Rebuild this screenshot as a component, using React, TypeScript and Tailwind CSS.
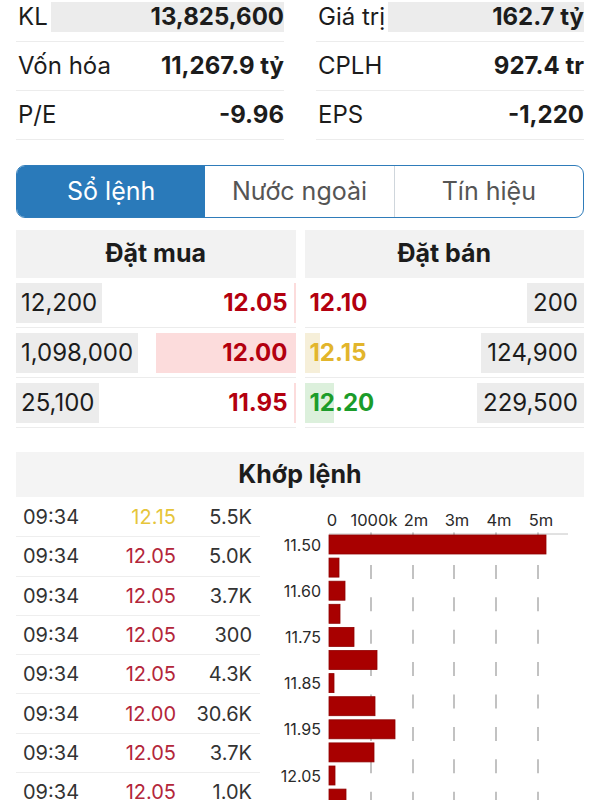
import React from 'react';

const FONT = { fontFamily: 'Inter, "Noto Sans", "Liberation Sans", sans-serif' };

type Stat = { label: string; value: string; flash?: boolean };

const leftStats: Stat[] = [
  { label: 'KL', value: '13,825,600', flash: true },
  { label: 'Vốn hóa', value: '11,267.9 tỷ' },
  { label: 'P/E', value: '-9.96' },
];
const rightStats: Stat[] = [
  { label: 'Giá trị', value: '162.7 tỷ', flash: true },
  { label: 'CPLH', value: '927.4 tr' },
  { label: 'EPS', value: '-1,220' },
];

const bids = [
  { vol: '12,200', price: '12.05', depth: 2 },
  { vol: '1,098,000', price: '12.00', depth: 140 },
  { vol: '25,100', price: '11.95', depth: 2 },
];
const asks = [
  { price: '12.10', vol: '200', color: 'text-[#b3000f]', bar: '', depth: 0 },
  { price: '12.15', vol: '124,900', color: 'text-[#e2b52c]', bar: 'bg-[#f6efd9]', depth: 15 },
  { price: '12.20', vol: '229,500', color: 'text-[#1b9c2a]', bar: 'bg-[#dcf0dc]', depth: 29 },
];

const trades = [
  { t: '09:34', p: '12.15', v: '5.5K', up: true },
  { t: '09:34', p: '12.05', v: '5.0K' },
  { t: '09:34', p: '12.05', v: '3.7K' },
  { t: '09:34', p: '12.05', v: '300' },
  { t: '09:34', p: '12.05', v: '4.3K' },
  { t: '09:34', p: '12.00', v: '30.6K' },
  { t: '09:34', p: '12.05', v: '3.7K' },
  { t: '09:34', p: '12.05', v: '1.0K' },
  { t: '09:34', p: '12.05', v: '2.1K' },
];

// volume by price level, in px from the zero line
const bars = [217, 10, 16, 11, 25, 48, 5, 46, 66, 45, 6, 17, 12];
const barLabels: Record<number, string> = { 0: '11.50', 2: '11.60', 4: '11.75', 6: '11.85', 8: '11.95', 10: '12.05', 12: '12.15' };

function StatColumn({ stats }: { stats: Stat[] }) {
  return (
    <div className="flex flex-col">
      {stats.map((s) => (
        <div key={s.label} className="h-[49px] flex items-center border-b border-[#ececec] text-[24px] text-[#1c1c1c]">
          <span className="pl-[2px] whitespace-nowrap">{s.label}</span>
          <span
            className={`flex-1 h-[30px] flex items-center justify-end font-bold ml-[3px] ${s.flash ? 'bg-[#ececec]' : ''}`}
          >
            {s.value}
          </span>
        </div>
      ))}
    </div>
  );
}

function VolumeChart() {
  const x0 = 69;
  const ticks = [
    { x: 69, l: '0' },
    { x: 111, l: '1000k' },
    { x: 153, l: '2m' },
    { x: 194, l: '3m' },
    { x: 236, l: '4m' },
    { x: 278, l: '5m' },
  ];
  return (
    <svg width="324" height="310" className="block">
      {ticks.map((t) => (
        <text key={t.l} x={t.x + 3} y="29" fontSize="16.5" fill="#2a2a2a" textAnchor="middle" style={FONT}>
          {t.l}
        </text>
      ))}
      <line x1={x0} y1="37" x2="308" y2="37" stroke="#c4c4c4" strokeWidth="1" />
      {ticks.slice(1).map((t) => (
        <line key={t.x} x1={t.x} y1="35.5" x2={t.x} y2="310" stroke="#9a9a9a" strokeWidth="1.2" strokeDasharray="14 18.4" />
      ))}
      {bars.map((w, i) => {
        const y = 38 + i * 23.1;
        return (
          <g key={i}>
            <rect x={x0} y={y} width={w} height="19" fill="#a80000" stroke="#8e0000" strokeWidth="0.8" />
            {barLabels[i] && (
              <text x="61" y={y + 15.5} fontSize="16" fill="#2a2a2a" textAnchor="end" style={FONT}>
                {barLabels[i]}
              </text>
            )}
          </g>
        );
      })}
    </svg>
  );
}

export default function App() {
  return (
    <div className="w-[600px] h-[800px] overflow-hidden bg-white text-[#1c1c1c]" style={FONT}>
      {/* summary stats */}
      <div className="-mt-[7px] px-4 grid grid-cols-2 gap-x-8">
        <StatColumn stats={leftStats} />
        <StatColumn stats={rightStats} />
      </div>

      {/* tabs */}
      <div className="mx-4 mt-[25px] h-[53px] flex rounded-[9px] border-[1.5px] border-[#2f7cba] overflow-hidden text-[25px]">
        <div className="flex-1 flex items-center justify-center bg-[#2a7aba] text-white">Sổ lệnh</div>
        <div className="flex-1 flex items-center justify-center text-[#555]">Nước ngoài</div>
        <div className="flex-1 flex items-center justify-center text-[#555] border-l border-[#cfd6dc]">Tín hiệu</div>
      </div>

      {/* order book */}
      <div className="mt-[12px] px-4 grid grid-cols-2 gap-x-[9px]">
        <div className="h-[48px] bg-[#f2f2f2] flex items-center justify-center text-[25px] font-bold">Đặt mua</div>
        <div className="h-[48px] bg-[#f2f2f2] flex items-center justify-center text-[25px] font-bold">Đặt bán</div>
        {bids.map((b, i) => {
          const a = asks[i];
          return (
            <React.Fragment key={b.price}>
              <div className="h-[50px] flex items-center border-b border-[#ececec] text-[24px]">
                <span className="h-[40px] flex items-center bg-[#ececec] px-[5px]">{b.vol}</span>
                <div className="relative flex-1 h-[40px] flex items-center justify-end pr-[8px]">
                  <div className="absolute right-0 top-0 h-full bg-[#fcdcdc]" style={{ width: b.depth }} />
                  <span className="relative font-bold text-[#b3000f]">{b.price}</span>
                </div>
              </div>
              <div className="h-[50px] flex items-center border-b border-[#ececec] text-[24px]">
                <div className="relative flex-1 h-[40px] flex items-center pl-[5px]">
                  <div className={`absolute left-0 top-0 h-full ${a.bar}`} style={{ width: a.depth }} />
                  <span className={`relative font-bold ${a.color}`}>{a.price}</span>
                </div>
                <span className="h-[40px] flex items-center bg-[#ececec] px-[6px]">{a.vol}</span>
              </div>
            </React.Fragment>
          );
        })}
      </div>

      {/* matched orders */}
      <div className="mx-4 mt-[24px] h-[45px] bg-[#f4f4f4] flex items-center justify-center text-[25px] font-bold">
        Khớp lệnh
      </div>
      <div className="px-4 flex">
        <div className="w-[244px] flex flex-col pt-[1px]">
          {trades.map((t, i) => (
            <div key={i} className="h-[39.3px] shrink-0 flex items-center border-b border-[#eeeeee] text-[20px] text-[#333]">
              <span className="pl-[7px] w-[90px]">{t.t}</span>
              <span className={`w-[70px] text-right ${t.up ? 'text-[#e6c53a]' : 'text-[#b3263a]'}`}>{t.p}</span>
              <span className="w-[76px] text-right">{t.v}</span>
            </div>
          ))}
        </div>
        <VolumeChart />
      </div>
    </div>
  );
}
